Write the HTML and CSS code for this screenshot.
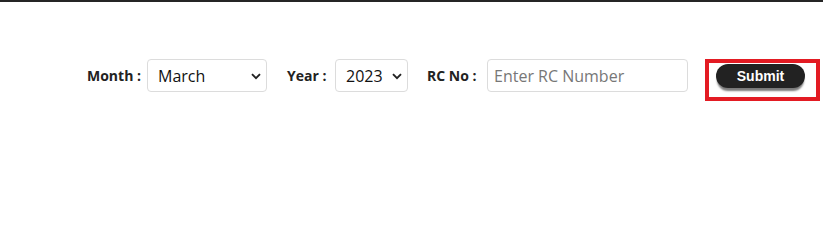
FILE: index.html
```html
<!DOCTYPE html>
<html>
<head>
<meta charset="utf-8">
<link rel="stylesheet" href="styles.css">
</head>
<body>
<div class="topbar"></div>
<form class="filter">
  <label class="lbl lbl-month">Month :</label>
  <div class="sel sel-month">
    <select><option>March</option></select>
    <svg class="chev" width="10" height="7" viewBox="0 0 10 7"><path d="M1 1.2 L5 5.2 L9 1.2" fill="none" stroke="#222" stroke-width="1.9"/></svg>
  </div>
  <label class="lbl lbl-year">Year :</label>
  <div class="sel sel-year">
    <select><option>2023</option></select>
    <svg class="chev" width="10" height="7" viewBox="0 0 10 7"><path d="M1 1.2 L5 5.2 L9 1.2" fill="none" stroke="#222" stroke-width="1.9"/></svg>
  </div>
  <label class="lbl lbl-rc">RC No :</label>
  <input class="rc" type="text" placeholder="Enter RC Number">
  <div class="highlight"><button type="button" class="submit">Submit</button></div>
</form>
</body>
</html>
```
FILE: styles.css
```css
html, body {
  margin: 0;
  padding: 0;
  background: #fff;
}
body {
  font-family: "Open Sans", "Liberation Sans", sans-serif;
  color: #222;
}
.topbar {
  height: 2px;
  background: #252525;
}
.filter {
  display: flex;
  align-items: flex-start;
  margin: 57px 0 0 87px;
}
.lbl {
  font-weight: bold;
  font-size: 14px;
  line-height: 33px;
  height: 33px;
  color: #222;
  white-space: nowrap;
}
.lbl-month { width: 60px; }
.lbl-year { width: 48px; margin-left: 20px; }
.lbl-rc { width: 60px; margin-left: 19px; }
.sel {
  position: relative;
}
.sel select {
  appearance: none;
  -webkit-appearance: none;
  height: 33px;
  border: 1px solid #dcdcdc;
  border-radius: 4px;
  background: #fff;
  font-family: inherit;
  font-size: 16px;
  color: #111;
  padding: 0 0 0 10px;
  margin: 0;
  display: block;
}
.sel-month select { width: 120px; }
.sel-year select { width: 73px; }
.chev {
  position: absolute;
  top: 14px;
  pointer-events: none;
}
.sel-month .chev { left: 104px; }
.sel-year .chev { left: 57px; }
.rc {
  width: 201px;
  height: 33px;
  box-sizing: border-box;
  border: 1px solid #dcdcdc;
  border-radius: 4px;
  font-family: inherit;
  font-size: 16px;
  padding: 0 6px;
  margin: 0;
  color: #222;
}
.rc::placeholder { color: #777; }
.highlight {
  margin-left: 17px;
  border: 4px solid #e31b23;
  width: 100px;
  height: 33px;
  padding: 1px 0 0 7px;
  box-sizing: content-box;
}
.submit {
  display: block;
  width: 89px;
  height: 24px;
  border: none;
  border-radius: 12px;
  background: #222;
  color: #fff;
  font-family: "Liberation Sans", Arial, sans-serif;
  font-weight: bold;
  font-size: 14px;
  padding: 0;
  box-shadow: 0 4px 2px -1px #7a7a7a;
}
```
